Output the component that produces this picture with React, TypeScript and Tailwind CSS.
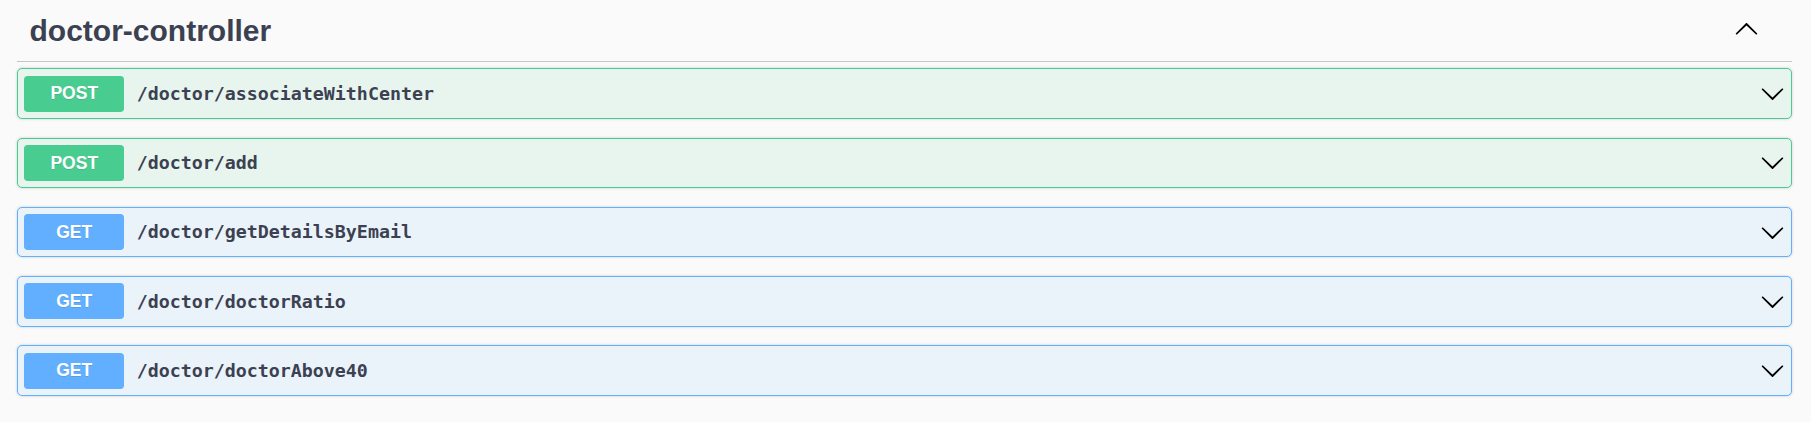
import React from "react";

type Op = { method: "POST" | "GET"; path: string };

const ops: Op[] = [
  { method: "POST", path: "/doctor/associateWithCenter" },
  { method: "POST", path: "/doctor/add" },
  { method: "GET", path: "/doctor/getDetailsByEmail" },
  { method: "GET", path: "/doctor/doctorRatio" },
  { method: "GET", path: "/doctor/doctorAbove40" },
];

const ARROW =
  "M17.418 6.109c.272-.268.709-.268.979 0s.271.701 0 .969l-7.908 7.83c-.27.268-.707.268-.979 0l-7.908-7.83c-.27-.268-.27-.701 0-.969.271-.268.709-.268.979 0L10 13.25l7.418-7.141z";

function Arrow({ up, className }: { up?: boolean; className?: string }) {
  return (
    <svg
      viewBox="0 0 20 20"
      width={25}
      height={25}
      className={className}
      style={up ? { transform: "rotate(180deg)" } : undefined}
    >
      <path d={ARROW} fill="#000" />
    </svg>
  );
}

function Row({ op }: { op: Op }) {
  const post = op.method === "POST";
  return (
    <div
      className={
        post
          ? "flex items-center h-[50.5px] p-[6.25px] border border-[#49cc90] bg-[#e8f5ef] rounded-[5px] shadow-[0_0_3px_rgba(0,0,0,0.19)]"
          : "flex items-center h-[50.5px] p-[6.25px] border border-[#61affe] bg-[#ebf3fa] rounded-[5px] shadow-[0_0_3px_rgba(0,0,0,0.19)]"
      }
    >
      <div
        className={
          post
            ? "flex items-center justify-center w-[100px] h-[36px] rounded-[3.75px] bg-[#49cc90] text-white font-bold text-[17.5px] [text-shadow:0_1px_0_rgba(0,0,0,0.1)] font-['Liberation_Sans',Arial,sans-serif]"
            : "flex items-center justify-center w-[100px] h-[36px] rounded-[3.75px] bg-[#61affe] text-white font-bold text-[17.5px] [text-shadow:0_1px_0_rgba(0,0,0,0.1)] font-['Liberation_Sans',Arial,sans-serif]"
        }
      >
        {op.method}
      </div>
      <div className="flex-1 pl-[12.5px] text-[#3b4151] font-bold text-[18.3px] font-['DejaVu_Sans_Mono',monospace]">
        {op.path}
      </div>
      <Arrow />
    </div>
  );
}

export default function App() {
  return (
    <div className="w-[1811px] h-[422px] bg-[#fafafa] pl-[17px] pr-[19px] font-['Liberation_Sans',Arial,sans-serif]">
      <div className="flex items-center h-[62px] border-b border-[#c4c6cb] pl-[12.5px] mb-[6.25px]">
        <h3 className="flex-1 text-[30px] font-bold leading-[34px] text-[#3b4151]">
          doctor-controller
        </h3>
        <Arrow up className="mr-[33px] mb-[3px]" />
      </div>
      <div className="flex flex-col gap-[18.75px]">
        {ops.map((op) => (
          <Row key={op.path} op={op} />
        ))}
      </div>
    </div>
  );
}
